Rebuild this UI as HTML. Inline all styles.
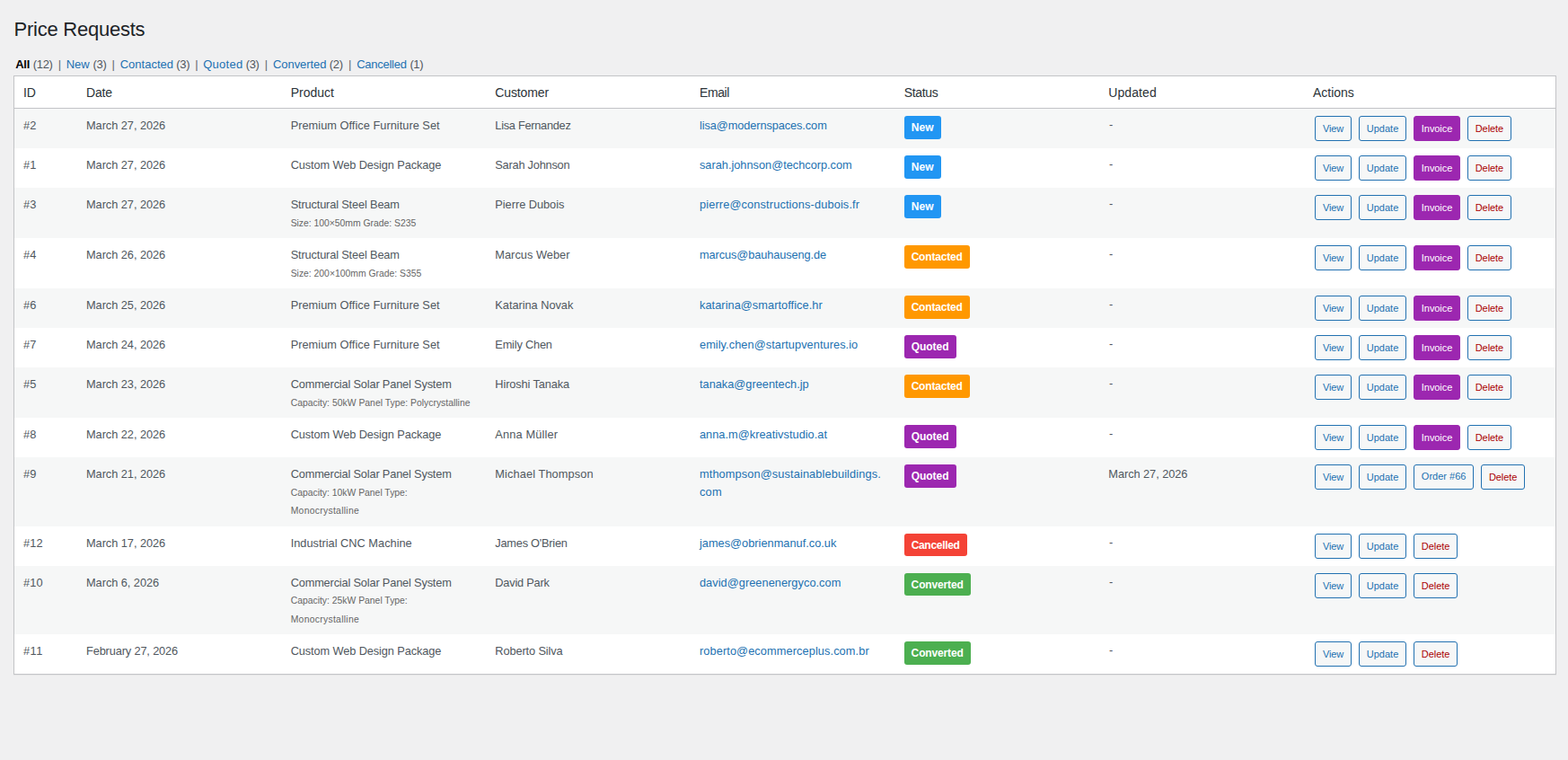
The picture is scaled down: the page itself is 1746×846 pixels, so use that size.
<!DOCTYPE html>
<html lang="en">
<head>
<meta charset="utf-8">
<title>Price Requests</title>
<style>
*{box-sizing:border-box}
html,body{margin:0;padding:0}
body{width:1746px;height:846px;overflow:hidden;background:#f0f0f1;color:#3c434a;font-family:"Liberation Sans",sans-serif;font-size:13px;line-height:1.4}
.wrap{position:absolute;left:15px;top:0;width:1718px}
h1{position:absolute;left:0;top:16px;margin:0;padding:0;font-size:22px;font-weight:400;line-height:30px;height:30px;color:#1d2327;white-space:nowrap}
h1 .f{position:relative;top:2px;left:0.6px}
ul.subsubsub{position:absolute;left:0;top:62px;width:600px;margin:0;padding:0;list-style:none;font-size:13px;line-height:20px;height:20px;color:#646970;white-space:nowrap;font-kerning:none}
ul.subsubsub li{display:block;position:absolute;top:0;margin:0;padding:0;white-space:pre}
ul.subsubsub span{display:inline-block}
ul.subsubsub a{color:#2271b1;text-decoration:none}
ul.subsubsub a.current{color:#000;font-weight:bold}
ul.subsubsub .count{color:#50575e;font-weight:400}
table.list{position:absolute;left:0;top:84px;width:1718px;table-layout:fixed;border-collapse:separate;border-spacing:0;border:1px solid #c3c4c7;background:#fff;box-shadow:0 1px 1px rgba(0,0,0,.04)}
table.list th{height:36px;padding:0 10px;text-align:left;font-weight:400;font-size:14px;color:#2c3338;border-bottom:1px solid #c3c4c7;vertical-align:top;white-space:nowrap}
table.list th .f{display:block;line-height:18px;height:18px;margin-top:9px}
table.list td{padding:0 10px;vertical-align:top;font-size:12.8px;color:#50575e;white-space:nowrap;overflow:visible}
table.list tbody tr:nth-child(odd) td{background:#f6f7f7}
.ln{display:block;height:19.5px;line-height:19.5px;margin-top:9px}
.ln + .ln{margin-top:0.5px}
.ln.dash .f{position:relative;top:-1px;left:0.7px}
.mt .f{position:relative;top:1px}
.mt.up .f{top:0}
small{display:block;font-size:inherit}
.mt{display:block;height:20.5px;line-height:20.5px;font-size:10.4px;color:#666;margin-top:0}
td a.em{color:#2271b1;text-decoration:none}
.bdg{display:block;margin-top:8px;height:26px;border-radius:3px;color:#fff;font-size:12px;font-weight:bold;text-align:center;line-height:19.5px;padding:4px 0 0 0;white-space:nowrap}
.bdg.s{height:25px}
.acts{display:flex;margin-top:8px;padding-left:2px;gap:7.56px}
.btn{display:block;height:28px;margin:0;padding:0;border:1px solid #2271b1;border-radius:3px;background:#f6f7f7;color:#2271b1;font-family:inherit;font-size:11px;line-height:26px;text-align:center;text-decoration:none;white-space:nowrap;cursor:pointer;flex:none}
.btn .f{position:relative;top:0}
.btn.inv{background:#9c27b0;border-color:#9c27b0;color:#fff}
.btn.del{color:#a00}
.btn.ord .f{top:-1px}
</style>
</head>
<body>
<div class="wrap">
<h1><span class="f h1" style="letter-spacing:-0.249px">Price Requests</span></h1>
<ul class="subsubsub"><li style="left:2.24px"><a href="#" class="current"><span style="letter-spacing:-0.264px">All</span> <span class="count" style="margin-left:0.03px;letter-spacing:-0.302px">(12)</span></a> <span class="sep" style="margin-left:2.50px">|</span></li><li style="left:58.83px"><a href="#"><span style="letter-spacing:-0.136px">New</span> <span class="count" style="margin-left:0.35px;letter-spacing:-0.288px">(3)</span></a> <span class="sep" style="margin-left:2.48px">|</span></li><li style="left:118.74px"><a href="#"><span style="letter-spacing:-0.008px">Contacted</span> <span class="count" style="margin-left:-0.45px;letter-spacing:-0.238px">(3)</span></a> <span class="sep" style="margin-left:2.33px">|</span></li><li style="left:211.28px"><a href="#"><span style="letter-spacing:0.242px">Quoted</span> <span class="count" style="margin-left:-0.20px;letter-spacing:-0.388px">(3)</span></a> <span class="sep" style="margin-left:2.58px">|</span></li><li style="left:288.94px"><a href="#"><span style="letter-spacing:-0.048px">Converted</span> <span class="count" style="margin-left:-0.31px;letter-spacing:-0.288px">(2)</span></a> <span class="sep" style="margin-left:2.48px">|</span></li><li style="left:382.14px"><a href="#"><span style="letter-spacing:-0.252px">Cancelled</span> <span class="count" style="margin-left:0.10px;letter-spacing:-0.388px">(1)</span></a></li></ul>
<table class="list">
<colgroup><col style="width:70px"><col><col><col><col><col><col><col style="width:280px"></colgroup>
<thead><tr><th><span class="f th" style="letter-spacing:-0.229px">ID</span></th><th><span class="f th" style="letter-spacing:-0.142px">Date</span></th><th><span class="f th" style="letter-spacing:0.004px">Product</span></th><th><span class="f th" style="letter-spacing:-0.120px">Customer</span></th><th><span class="f th" style="letter-spacing:-0.394px">Email</span></th><th><span class="f th" style="letter-spacing:-0.301px">Status</span></th><th><span class="f th" style="letter-spacing:0.081px">Updated</span></th><th><span class="f th" style="letter-spacing:-0.033px">Actions</span></th></tr></thead>
<tbody>
<tr style="height:44px"><td><span class="ln"><span class="f c" style="letter-spacing:0.227px">#2</span></span></td><td><span class="ln"><span class="f c" style="letter-spacing:-0.056px">March 27, 2026</span></span></td><td><span class="ln"><span class="f c" style="letter-spacing:0.018px">Premium Office Furniture Set</span></span></td><td><span class="ln"><span class="f c" style="letter-spacing:-0.282px">Lisa Fernandez</span></span></td><td><a class="em" href="#"><span class="ln"><span class="f c" style="letter-spacing:-0.102px">lisa@modernspaces.com</span></span></a></td><td><span class="bdg" style="width:41px;background:#2196f3"><span class="f b" style="letter-spacing:0.104px">New</span></span></td><td><span class="ln dash"><span class="f c" style="letter-spacing:0.933px">-</span></span></td><td><div class="acts"><button class="btn" type="button" style="width:41.19px"><span class="f bt" style="letter-spacing:-0.117px">View</span></button><button class="btn" type="button" style="width:53.57px"><span class="f bt" style="letter-spacing:0.014px">Update</span></button><button class="btn inv" type="button" style="width:52.36px"><span class="f bt" style="letter-spacing:-0.071px">Invoice</span></button><button class="btn del" type="button" style="width:49.38px"><span class="f bt" style="letter-spacing:-0.069px">Delete</span></button></div></td></tr>
<tr style="height:44px"><td><span class="ln"><span class="f c" style="letter-spacing:0.227px">#1</span></span></td><td><span class="ln"><span class="f c" style="letter-spacing:-0.056px">March 27, 2026</span></span></td><td><span class="ln"><span class="f c" style="letter-spacing:-0.115px">Custom Web Design Package</span></span></td><td><span class="ln"><span class="f c" style="letter-spacing:-0.238px">Sarah Johnson</span></span></td><td><a class="em" href="#"><span class="ln"><span class="f c" style="letter-spacing:-0.016px">sarah.johnson@techcorp.com</span></span></a></td><td><span class="bdg" style="width:41px;background:#2196f3"><span class="f b" style="letter-spacing:0.104px">New</span></span></td><td><span class="ln dash"><span class="f c" style="letter-spacing:0.933px">-</span></span></td><td><div class="acts"><button class="btn" type="button" style="width:41.19px"><span class="f bt" style="letter-spacing:-0.117px">View</span></button><button class="btn" type="button" style="width:53.57px"><span class="f bt" style="letter-spacing:0.014px">Update</span></button><button class="btn inv" type="button" style="width:52.36px"><span class="f bt" style="letter-spacing:-0.071px">Invoice</span></button><button class="btn del" type="button" style="width:49.38px"><span class="f bt" style="letter-spacing:-0.069px">Delete</span></button></div></td></tr>
<tr style="height:56px"><td><span class="ln"><span class="f c" style="letter-spacing:0.227px">#3</span></span></td><td><span class="ln"><span class="f c" style="letter-spacing:-0.056px">March 27, 2026</span></span></td><td><span class="ln"><span class="f c" style="letter-spacing:-0.158px">Structural Steel Beam</span></span><small><span class="mt"><span class="f m" style="letter-spacing:-0.021px">Size: 100×50mm Grade: S235</span></span></small></td><td><span class="ln"><span class="f c" style="letter-spacing:-0.038px">Pierre Dubois</span></span></td><td><a class="em" href="#"><span class="ln"><span class="f c" style="letter-spacing:0.124px">pierre@constructions-dubois.fr</span></span></a></td><td><span class="bdg" style="width:41px;background:#2196f3"><span class="f b" style="letter-spacing:0.104px">New</span></span></td><td><span class="ln dash"><span class="f c" style="letter-spacing:0.933px">-</span></span></td><td><div class="acts"><button class="btn" type="button" style="width:41.19px"><span class="f bt" style="letter-spacing:-0.117px">View</span></button><button class="btn" type="button" style="width:53.57px"><span class="f bt" style="letter-spacing:0.014px">Update</span></button><button class="btn inv" type="button" style="width:52.36px"><span class="f bt" style="letter-spacing:-0.071px">Invoice</span></button><button class="btn del" type="button" style="width:49.38px"><span class="f bt" style="letter-spacing:-0.069px">Delete</span></button></div></td></tr>
<tr style="height:56px"><td><span class="ln"><span class="f c" style="letter-spacing:0.227px">#4</span></span></td><td><span class="ln"><span class="f c" style="letter-spacing:-0.056px">March 26, 2026</span></span></td><td><span class="ln"><span class="f c" style="letter-spacing:-0.158px">Structural Steel Beam</span></span><small><span class="mt"><span class="f m" style="letter-spacing:-0.010px">Size: 200×100mm Grade: S355</span></span></small></td><td><span class="ln"><span class="f c" style="letter-spacing:0.015px">Marcus Weber</span></span></td><td><a class="em" href="#"><span class="ln"><span class="f c" style="letter-spacing:-0.103px">marcus@bauhauseng.de</span></span></a></td><td><span class="bdg" style="width:73px;background:#ff9800"><span class="f b" style="letter-spacing:-0.186px">Contacted</span></span></td><td><span class="ln dash"><span class="f c" style="letter-spacing:0.933px">-</span></span></td><td><div class="acts"><button class="btn" type="button" style="width:41.19px"><span class="f bt" style="letter-spacing:-0.117px">View</span></button><button class="btn" type="button" style="width:53.57px"><span class="f bt" style="letter-spacing:0.014px">Update</span></button><button class="btn inv" type="button" style="width:52.36px"><span class="f bt" style="letter-spacing:-0.071px">Invoice</span></button><button class="btn del" type="button" style="width:49.38px"><span class="f bt" style="letter-spacing:-0.069px">Delete</span></button></div></td></tr>
<tr style="height:44px"><td><span class="ln"><span class="f c" style="letter-spacing:0.227px">#6</span></span></td><td><span class="ln"><span class="f c" style="letter-spacing:-0.056px">March 25, 2026</span></span></td><td><span class="ln"><span class="f c" style="letter-spacing:0.018px">Premium Office Furniture Set</span></span></td><td><span class="ln"><span class="f c" style="letter-spacing:-0.035px">Katarina Novak</span></span></td><td><a class="em" href="#"><span class="ln"><span class="f c" style="letter-spacing:0.043px">katarina@smartoffice.hr</span></span></a></td><td><span class="bdg" style="width:73px;background:#ff9800"><span class="f b" style="letter-spacing:-0.186px">Contacted</span></span></td><td><span class="ln dash"><span class="f c" style="letter-spacing:0.933px">-</span></span></td><td><div class="acts"><button class="btn" type="button" style="width:41.19px"><span class="f bt" style="letter-spacing:-0.117px">View</span></button><button class="btn" type="button" style="width:53.57px"><span class="f bt" style="letter-spacing:0.014px">Update</span></button><button class="btn inv" type="button" style="width:52.36px"><span class="f bt" style="letter-spacing:-0.071px">Invoice</span></button><button class="btn del" type="button" style="width:49.38px"><span class="f bt" style="letter-spacing:-0.069px">Delete</span></button></div></td></tr>
<tr style="height:44px"><td><span class="ln"><span class="f c" style="letter-spacing:0.227px">#7</span></span></td><td><span class="ln"><span class="f c" style="letter-spacing:-0.056px">March 24, 2026</span></span></td><td><span class="ln"><span class="f c" style="letter-spacing:0.018px">Premium Office Furniture Set</span></span></td><td><span class="ln"><span class="f c" style="letter-spacing:-0.201px">Emily Chen</span></span></td><td><a class="em" href="#"><span class="ln"><span class="f c" style="letter-spacing:0.047px">emily.chen@startupventures.io</span></span></a></td><td><span class="bdg" style="width:58px;background:#9c27b0"><span class="f b" style="letter-spacing:0.000px">Quoted</span></span></td><td><span class="ln dash"><span class="f c" style="letter-spacing:0.933px">-</span></span></td><td><div class="acts"><button class="btn" type="button" style="width:41.19px"><span class="f bt" style="letter-spacing:-0.117px">View</span></button><button class="btn" type="button" style="width:53.57px"><span class="f bt" style="letter-spacing:0.014px">Update</span></button><button class="btn inv" type="button" style="width:52.36px"><span class="f bt" style="letter-spacing:-0.071px">Invoice</span></button><button class="btn del" type="button" style="width:49.38px"><span class="f bt" style="letter-spacing:-0.069px">Delete</span></button></div></td></tr>
<tr style="height:56px"><td><span class="ln"><span class="f c" style="letter-spacing:0.227px">#5</span></span></td><td><span class="ln"><span class="f c" style="letter-spacing:-0.056px">March 23, 2026</span></span></td><td><span class="ln"><span class="f c" style="letter-spacing:-0.179px">Commercial Solar Panel System</span></span><small><span class="mt"><span class="f m" style="letter-spacing:0.005px">Capacity: 50kW Panel Type: Polycrystalline</span></span></small></td><td><span class="ln"><span class="f c" style="letter-spacing:-0.122px">Hiroshi Tanaka</span></span></td><td><a class="em" href="#"><span class="ln"><span class="f c" style="letter-spacing:-0.005px">tanaka@greentech.jp</span></span></a></td><td><span class="bdg" style="width:73px;background:#ff9800"><span class="f b" style="letter-spacing:-0.186px">Contacted</span></span></td><td><span class="ln dash"><span class="f c" style="letter-spacing:0.933px">-</span></span></td><td><div class="acts"><button class="btn" type="button" style="width:41.19px"><span class="f bt" style="letter-spacing:-0.117px">View</span></button><button class="btn" type="button" style="width:53.57px"><span class="f bt" style="letter-spacing:0.014px">Update</span></button><button class="btn inv" type="button" style="width:52.36px"><span class="f bt" style="letter-spacing:-0.071px">Invoice</span></button><button class="btn del" type="button" style="width:49.38px"><span class="f bt" style="letter-spacing:-0.069px">Delete</span></button></div></td></tr>
<tr style="height:44px"><td><span class="ln"><span class="f c" style="letter-spacing:0.227px">#8</span></span></td><td><span class="ln"><span class="f c" style="letter-spacing:-0.056px">March 22, 2026</span></span></td><td><span class="ln"><span class="f c" style="letter-spacing:-0.115px">Custom Web Design Package</span></span></td><td><span class="ln"><span class="f c" style="letter-spacing:0.146px">Anna Müller</span></span></td><td><a class="em" href="#"><span class="ln"><span class="f c" style="letter-spacing:0.013px">anna.m@kreativstudio.at</span></span></a></td><td><span class="bdg" style="width:58px;background:#9c27b0"><span class="f b" style="letter-spacing:0.000px">Quoted</span></span></td><td><span class="ln dash"><span class="f c" style="letter-spacing:0.933px">-</span></span></td><td><div class="acts"><button class="btn" type="button" style="width:41.19px"><span class="f bt" style="letter-spacing:-0.117px">View</span></button><button class="btn" type="button" style="width:53.57px"><span class="f bt" style="letter-spacing:0.014px">Update</span></button><button class="btn inv" type="button" style="width:52.36px"><span class="f bt" style="letter-spacing:-0.071px">Invoice</span></button><button class="btn del" type="button" style="width:49.38px"><span class="f bt" style="letter-spacing:-0.069px">Delete</span></button></div></td></tr>
<tr style="height:77px"><td><span class="ln"><span class="f c" style="letter-spacing:0.227px">#9</span></span></td><td><span class="ln"><span class="f c" style="letter-spacing:-0.056px">March 21, 2026</span></span></td><td><span class="ln"><span class="f c" style="letter-spacing:-0.179px">Commercial Solar Panel System</span></span><small><span class="mt"><span class="f m" style="letter-spacing:-0.010px">Capacity: 10kW Panel Type:</span></span> <span class="mt"><span class="f m" style="letter-spacing:0.282px">Monocrystalline</span></span></small></td><td><span class="ln"><span class="f c" style="letter-spacing:0.095px">Michael Thompson</span></span></td><td><a class="em" href="#"><span class="ln"><span class="f c" style="letter-spacing:0.102px">mthompson@sustainablebuildings.</span></span><span class="ln"><span class="f c" style="letter-spacing:0.211px">com</span></span></a></td><td><span class="bdg" style="width:58px;background:#9c27b0"><span class="f b" style="letter-spacing:0.000px">Quoted</span></span></td><td><span class="ln"><span class="f c" style="letter-spacing:-0.056px">March 27, 2026</span></span></td><td><div class="acts"><button class="btn" type="button" style="width:41.19px"><span class="f bt" style="letter-spacing:-0.117px">View</span></button><button class="btn" type="button" style="width:53.57px"><span class="f bt" style="letter-spacing:0.014px">Update</span></button><a class="btn ord" href="#" style="width:67.54px"><span class="f bt" style="letter-spacing:0.001px">Order #66</span></a><button class="btn del" type="button" style="width:49.38px"><span class="f bt" style="letter-spacing:-0.069px">Delete</span></button></div></td></tr>
<tr style="height:44px"><td><span class="ln"><span class="f c" style="letter-spacing:0.112px">#12</span></span></td><td><span class="ln"><span class="f c" style="letter-spacing:-0.056px">March 17, 2026</span></span></td><td><span class="ln"><span class="f c" style="letter-spacing:-0.004px">Industrial CNC Machine</span></span></td><td><span class="ln"><span class="f c" style="letter-spacing:-0.244px">James O'Brien</span></span></td><td><a class="em" href="#"><span class="ln"><span class="f c" style="letter-spacing:0.000px">james@obrienmanuf.co.uk</span></span></a></td><td><span class="bdg s" style="width:70px;background:#f44336"><span class="f b" style="letter-spacing:-0.300px">Cancelled</span></span></td><td><span class="ln dash"><span class="f c" style="letter-spacing:0.933px">-</span></span></td><td><div class="acts"><button class="btn" type="button" style="width:41.19px"><span class="f bt" style="letter-spacing:-0.117px">View</span></button><button class="btn" type="button" style="width:53.57px"><span class="f bt" style="letter-spacing:0.014px">Update</span></button><button class="btn del" type="button" style="width:49.38px"><span class="f bt" style="letter-spacing:-0.069px">Delete</span></button></div></td></tr>
<tr style="height:76px"><td><span class="ln"><span class="f c" style="letter-spacing:0.112px">#10</span></span></td><td><span class="ln"><span class="f c" style="letter-spacing:-0.052px">March 6, 2026</span></span></td><td><span class="ln"><span class="f c" style="letter-spacing:-0.179px">Commercial Solar Panel System</span></span><small><span class="mt up"><span class="f m" style="letter-spacing:-0.010px">Capacity: 25kW Panel Type:</span></span> <span class="mt"><span class="f m" style="letter-spacing:0.282px">Monocrystalline</span></span></small></td><td><span class="ln"><span class="f c" style="letter-spacing:-0.221px">David Park</span></span></td><td><a class="em" href="#"><span class="ln"><span class="f c" style="letter-spacing:0.032px">david@greenenergyco.com</span></span></a></td><td><span class="bdg s" style="width:74px;background:#4caf50"><span class="f b" style="letter-spacing:-0.149px">Converted</span></span></td><td><span class="ln dash"><span class="f c" style="letter-spacing:0.933px">-</span></span></td><td><div class="acts"><button class="btn" type="button" style="width:41.19px"><span class="f bt" style="letter-spacing:-0.117px">View</span></button><button class="btn" type="button" style="width:53.57px"><span class="f bt" style="letter-spacing:0.014px">Update</span></button><button class="btn del" type="button" style="width:49.38px"><span class="f bt" style="letter-spacing:-0.069px">Delete</span></button></div></td></tr>
<tr style="height:44px"><td><span class="ln"><span class="f c" style="letter-spacing:0.430px">#11</span></span></td><td><span class="ln"><span class="f c" style="letter-spacing:-0.150px">February 27, 2026</span></span></td><td><span class="ln"><span class="f c" style="letter-spacing:-0.115px">Custom Web Design Package</span></span></td><td><span class="ln"><span class="f c" style="letter-spacing:-0.127px">Roberto Silva</span></span></td><td><a class="em" href="#"><span class="ln"><span class="f c" style="letter-spacing:0.080px">roberto@ecommerceplus.com.br</span></span></a></td><td><span class="bdg" style="width:74px;background:#4caf50"><span class="f b" style="letter-spacing:-0.149px">Converted</span></span></td><td><span class="ln dash"><span class="f c" style="letter-spacing:0.933px">-</span></span></td><td><div class="acts"><button class="btn" type="button" style="width:41.19px"><span class="f bt" style="letter-spacing:-0.117px">View</span></button><button class="btn" type="button" style="width:53.57px"><span class="f bt" style="letter-spacing:0.014px">Update</span></button><button class="btn del" type="button" style="width:49.38px"><span class="f bt" style="letter-spacing:-0.069px">Delete</span></button></div></td></tr>
</tbody>
</table>
</div>
</body>
</html>
